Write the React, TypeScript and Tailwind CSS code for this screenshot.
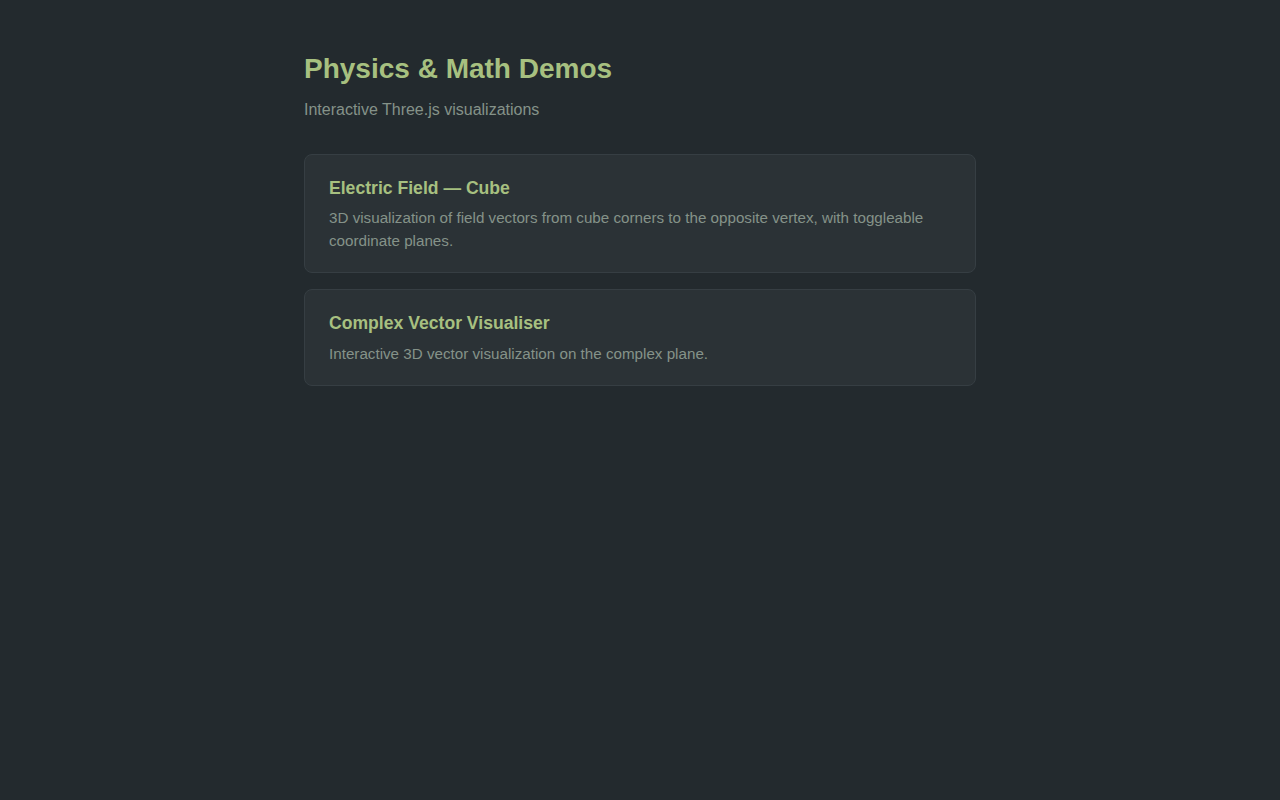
import React from "react";

const demos = [
  {
    title: "Electric Field — Cube",
    desc: "3D visualization of field vectors from cube corners to the opposite vertex, with toggleable coordinate planes.",
  },
  {
    title: "Complex Vector Visualiser",
    desc: "Interactive 3D vector visualization on the complex plane.",
  },
];

export default function App() {
  return (
    <div
      className="min-h-screen bg-[#232a2e] text-[#859289]"
      style={{ fontFamily: '"Liberation Sans", Arial, sans-serif' }}
    >
      <div className="mx-auto max-w-[672px] pt-12">
        <h1 className="text-[28px] leading-[1.5] font-bold text-[#a7c080]">Physics &amp; Math Demos</h1>
        <p className="mt-2 text-base leading-6 text-[#859289]">Interactive Three.js visualizations</p>
        <div className="mt-8 flex flex-col gap-4">
          {demos.map((d) => (
            <a
              key={d.title}
              href="#"
              className="block rounded-lg border border-[#363e43] bg-[#2b3236] px-6 py-5"
            >
              <h2 className="text-[17.6px] leading-[1.5] font-bold text-[#a7c080]">{d.title}</h2>
              <p className="mt-[5px] text-[15.2px] leading-[23px] text-[#859289]">{d.desc}</p>
            </a>
          ))}
        </div>
      </div>
    </div>
  );
}
